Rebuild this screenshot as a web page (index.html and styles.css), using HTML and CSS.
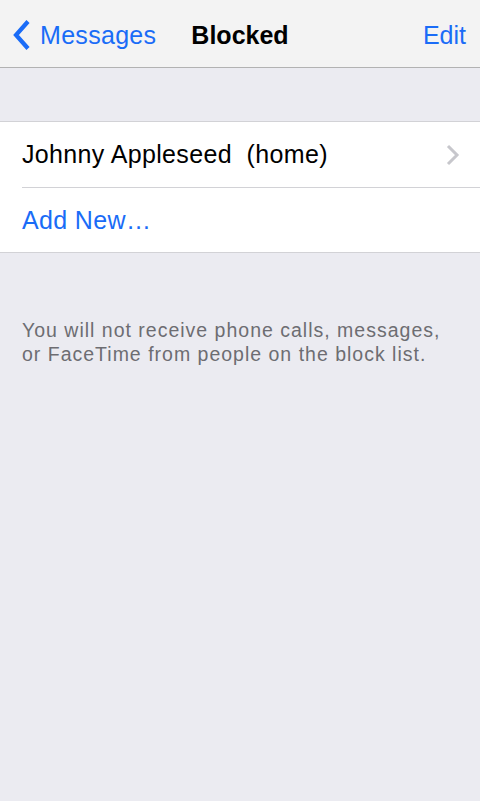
FILE: index.html
```html
<!DOCTYPE html>
<html>
<head>
<meta charset="utf-8">
<link rel="stylesheet" href="styles.css">
</head>
<body>
<header class="navbar">
  <a class="back">
    <svg class="back-icon" width="20" height="32" viewBox="0 0 20 32"><path d="M16 2.5 L4 16 L16 29.5" fill="none" stroke="#1a6cf7" stroke-width="4.2" stroke-linecap="butt" stroke-linejoin="miter"/></svg>
    <span>Messages</span>
  </a>
  <div class="title">Blocked</div>
  <a class="edit">Edit</a>
</header>
<main class="content">
  <ul class="group">
    <li class="row">
      <span class="row-text">Johnny Appleseed&nbsp; (home)</span>
      <svg class="chev" width="14" height="22" viewBox="0 0 14 22"><path d="M2 2 L11 11 L2 20" fill="none" stroke="#c7c7cc" stroke-width="3"/></svg>
    </li>
    <li class="row">
      <span class="row-text link">Add New…</span>
    </li>
  </ul>
  <p class="footer">You will not receive phone calls, messages, or FaceTime from people on the block list.</p>
</main>
</body>
</html>
```
FILE: styles.css
```css
html, body {
  margin: 0;
  padding: 0;
  height: 100%;
}
body {
  background: #ebebf1;
  font-family: "Liberation Sans", Arial, sans-serif;
  -webkit-font-smoothing: antialiased;
}
.navbar {
  height: 68px;
  box-sizing: border-box;
  background: #f3f3f3;
  border-bottom: 1.5px solid #b2b2b2;
  display: flex;
  align-items: center;
  justify-content: space-between;
  padding: 3px 14px 0 12px;
  position: relative;
}
.back {
  display: flex;
  align-items: center;
  color: #1a6cf7;
  font-size: 25px;
  gap: 8px;
}
.back span {
  letter-spacing: 0.3px;
}
.back-icon {
  display: block;
}
.title {
  position: absolute;
  left: 0;
  right: 0;
  top: 3px;
  bottom: 0;
  display: flex;
  align-items: center;
  justify-content: center;
  font-weight: bold;
  font-size: 25px;
  color: #000;
  pointer-events: none;
}
.edit {
  color: #1a6cf7;
  font-size: 25px;
}
.content {
  padding-top: 53px;
}
.group {
  list-style: none;
  margin: 0;
  padding: 0 0 0 22px;
  background: #fff;
  border-top: 1px solid #d2d2d6;
  border-bottom: 1px solid #d2d2d6;
}
.row {
  height: 65px;
  display: flex;
  align-items: center;
  justify-content: space-between;
  padding-right: 20px;
  box-sizing: border-box;
}
.row + .row {
  border-top: 1px solid #d2d2d6;
}
.row-text {
  font-size: 25px;
  color: #000;
  letter-spacing: 0.35px;
}
.link {
  color: #1a6cf7;
}
.chev {
  display: block;
}
.footer {
  margin: 0;
  padding: 65px 36px 0 22px;
  font-size: 19.5px;
  line-height: 24px;
  letter-spacing: 1px;
  color: #6d6d72;
}
```
